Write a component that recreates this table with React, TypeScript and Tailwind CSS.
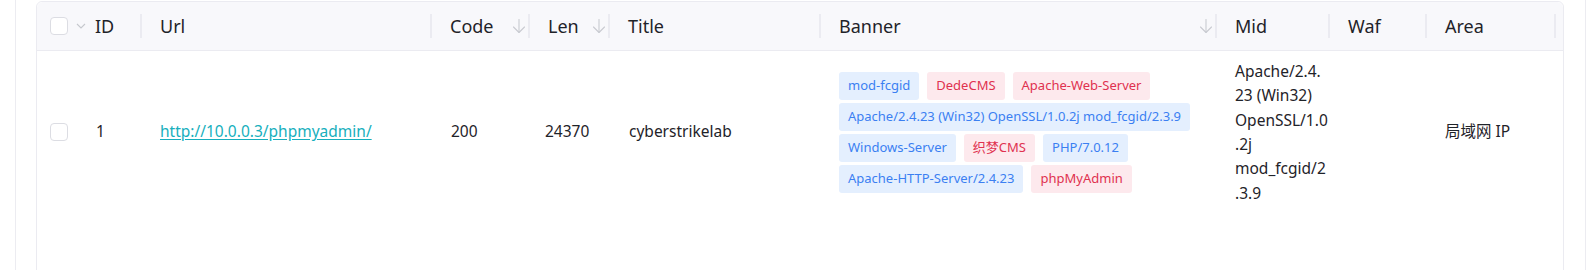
import React from "react";

const FONT = { fontFamily: '"Noto Sans", "Noto Sans CJK SC", sans-serif' };

function SortArrow() {
  return (
    <svg width="14" height="16" viewBox="0 0 14 16" fill="none" stroke="#c9cbd1" strokeWidth="1.1" strokeLinecap="round" strokeLinejoin="round">
      <path d="M7 1.5V14.5" />
      <path d="M1.5 9L7 14.5L12.5 9" />
    </svg>
  );
}

function Divider() {
  return <div className="w-[2px] h-6 bg-[#ebebf1] shrink-0" />;
}

function Checkbox() {
  return <div className="w-[18px] h-[18px] rounded-[4px] border border-[#dcdde3] bg-white shrink-0" />;
}

function HeadCell({ w, label, sort }: { w: string; label?: string; sort?: boolean }) {
  return (
    <div className={`${w} h-full flex items-center shrink-0`}>
      <div className="flex-1 flex items-center pl-[18px] pr-[2px] min-w-0">
        {label && <span>{label}</span>}
        <div className="flex-1" />
        {sort && <SortArrow />}
      </div>
      <Divider />
    </div>
  );
}

const blue = "bg-[#e4effe] text-[#3b7ff2]";
const red = "bg-[#fde9ed] text-[#e0314f]";

function Tag({ text, c }: { text: string; c: string }) {
  return <span className={`${c} h-[28px] px-[9px] rounded-[3px] text-[13px] flex items-center whitespace-nowrap`}>{text}</span>;
}

export default function App() {
  return (
    <div className="h-[270px] overflow-hidden bg-white" style={FONT}>
      <div className="ml-[15px] mr-[5px] h-full border-l border-r border-[#ececf1] pl-[20px] pr-[21px] pt-px">
        <div className="h-[300px] border border-[#ebebf1] rounded-t-[6px] text-[#1f2329]">
          {/* header */}
          <div className="h-[49px] bg-[#f8f8fb] border-b border-[#ebebf1] rounded-t-[6px] flex items-center text-[18px]">
            <div className="w-[105px] h-full flex items-center shrink-0">
              <div className="flex-1 flex items-center pl-[13px]">
                <Checkbox />
                <svg className="ml-[8px]" width="10" height="6" viewBox="0 0 10 6" fill="none" stroke="#c6c8ce" strokeWidth="1.1">
                  <path d="M1 1L5 5L9 1" />
                </svg>
                <span className="ml-[9px]">ID</span>
              </div>
              <Divider />
            </div>
            <HeadCell w="w-[290px]" label="Url" />
            <HeadCell w="w-[98px]" label="Code" sort />
            <HeadCell w="w-[80px]" label="Len" sort />
            <HeadCell w="w-[211px]" label="Title" />
            <HeadCell w="w-[396px]" label="Banner" sort />
            <HeadCell w="w-[113px]" label="Mid" />
            <HeadCell w="w-[97px]" label="Waf" />
            <div className="flex-1 h-full flex items-center">
              <div className="flex-1 pl-[18px]">Area</div>
              <Divider />
              <div className="w-[7px]" />
            </div>
          </div>
          {/* row */}
          <div className="h-[162px] flex items-center text-[15.5px]">
            <div className="w-[105px] flex items-center shrink-0 pl-[13px]">
              <Checkbox />
              <span className="ml-[28px]">1</span>
            </div>
            <div className="w-[290px] pl-[18px] shrink-0">
              <a className="text-[#17afbd] underline underline-offset-2">http://10.0.0.3/phpmyadmin/</a>
            </div>
            <div className="w-[98px] pl-[19px] shrink-0">200</div>
            <div className="w-[80px] pl-[15px] shrink-0">24370</div>
            <div className="w-[211px] pl-[19px] shrink-0">cyberstrikelab</div>
            <div className="w-[396px] pl-[18px] shrink-0">
              <div className="flex flex-wrap gap-x-[8px] gap-y-[3px] w-[370px]">
                <Tag text="mod-fcgid" c={blue} />
                <Tag text="DedeCMS" c={red} />
                <Tag text="Apache-Web-Server" c={red} />
                <Tag text="Apache/2.4.23 (Win32) OpenSSL/1.0.2j mod_fcgid/2.3.9" c={blue} />
                <Tag text="Windows-Server" c={blue} />
                <Tag text="织梦CMS" c={red} />
                <Tag text="PHP/7.0.12" c={blue} />
                <Tag text="Apache-HTTP-Server/2.4.23" c={blue} />
                <Tag text="phpMyAdmin" c={red} />
              </div>
            </div>
            <div className="w-[113px] pl-[18px] shrink-0 leading-[24.4px]">
              Apache/2.4.<br />23 (Win32)<br />OpenSSL/1.0<br />.2j<br />mod_fcgid/2<br />.3.9
            </div>
            <div className="w-[97px] shrink-0" />
            <div className="flex-1 pl-[18px]">局域网 IP</div>
          </div>
        </div>
      </div>
    </div>
  );
}
